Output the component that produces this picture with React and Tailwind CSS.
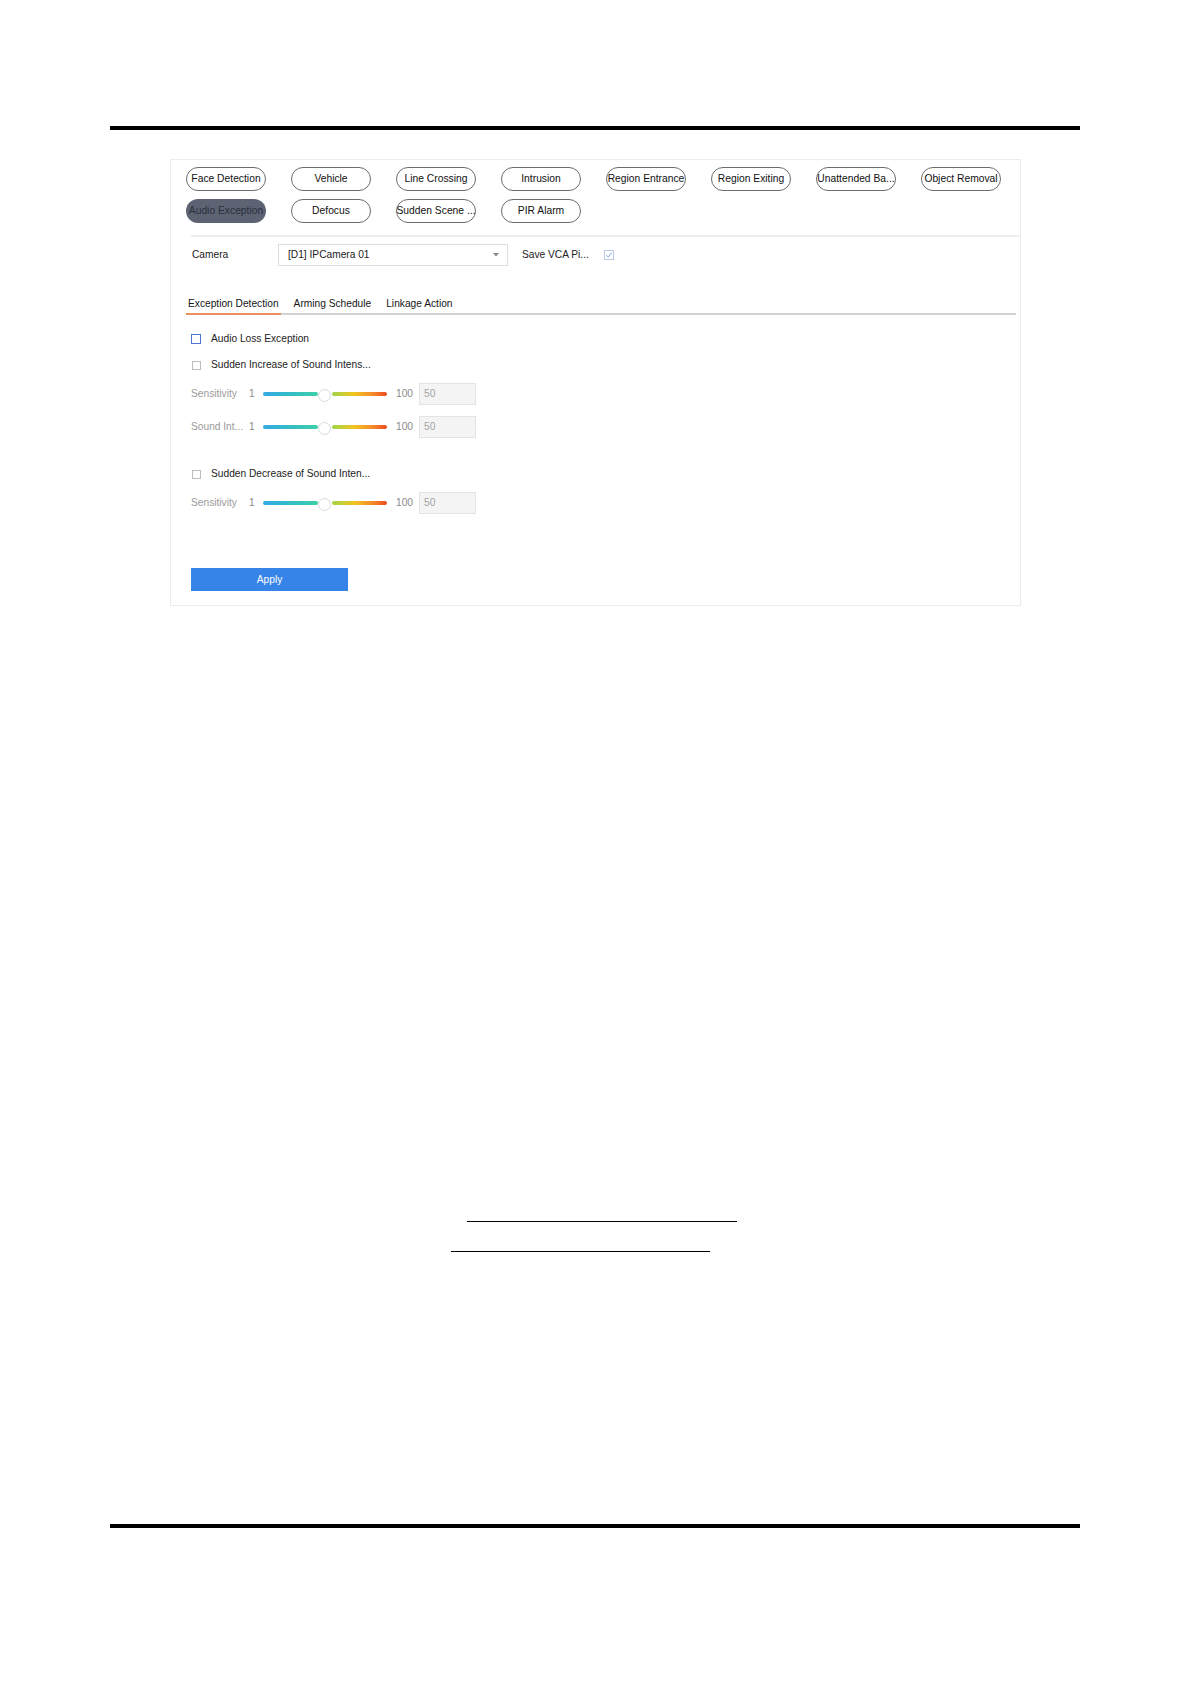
import React from "react";

const pillsRow1 = ["Face Detection", "Vehicle", "Line Crossing", "Intrusion", "Region Entrance", "Region Exiting", "Unattended Ba...", "Object Removal"];
const pillsRow2 = ["Audio Exception", "Defocus", "Sudden Scene ...", "PIR Alarm"];

function Pill({ label, active }) {
  if (active) {
    return (
      <div className="h-[24px] w-[80px] rounded-full bg-[#5d6373] flex items-center justify-center whitespace-nowrap text-[10.3px] text-[#2a2f3c] overflow-visible">
        {label}
      </div>
    );
  }
  return (
    <div className="h-[24px] w-[80px] rounded-full border border-[#6b6b6b] flex items-center justify-center whitespace-nowrap text-[10.3px] text-[#111111] overflow-visible">
      {label}
    </div>
  );
}

function Slider() {
  return (
    <div className="w-[124px] h-[14px] flex items-center">
      <div className="w-[55px] h-[4px] rounded-full bg-gradient-to-r from-[#34a9e4] to-[#3ccfa6]" />
      <div className="w-[13px] h-[13px] rounded-full bg-white border border-[#dadada] mt-[3px] shrink-0" />
      <div className="flex-1 ml-[1px] h-[4px] rounded-full bg-[linear-gradient(to_right,#9fd54a,#f1c51f_40%,#f3892a_75%,#ef4a21)]" />
    </div>
  );
}

function SliderRow({ label }) {
  return (
    <div className="flex items-center h-[22px] text-[10.2px]">
      <div className="w-[58px] text-[#9a9a9a] whitespace-nowrap">{label}</div>
      <div className="w-[14px] text-[#8a8a8a]">1</div>
      <Slider />
      <div className="ml-[9px] w-[23px] text-[#8a8a8a]">100</div>
      <div className="w-[57px] h-[22px] bg-[#f4f4f4] border border-[#e3e3e3] flex items-center pl-[4px] text-[#a5a5a5]">50</div>
    </div>
  );
}

function CheckRow({ label, blue }) {
  return (
    <div className="flex items-center h-[16px] text-[10.2px] text-[#222222]">
      {blue ? (
        <div className="w-[10px] h-[10px] border border-[#4a78cf] bg-white shrink-0" />
      ) : (
        <div className="w-[9px] h-[9px] border border-[#bdbdbd] bg-white shrink-0 ml-[0.5px] mr-[0.5px]" />
      )}
      <div className="ml-[10px] whitespace-nowrap">{label}</div>
    </div>
  );
}

export default function App() {
  return (
    <div className="w-[1191px] h-[1684px] bg-white font-['Liberation_Sans',Arial,sans-serif] flex flex-col">
      <div className="mt-[126px] ml-[110px] w-[970px] h-[4px] bg-black" />

      <div className="mt-[29px] ml-[170px] w-[851px] h-[447px] border border-[#ececec] flex flex-col">
        <div className="pt-[7px] pl-[15px] grid grid-cols-[repeat(8,80px)] gap-x-[25px] gap-y-[8px]">
          {pillsRow1.map((p) => (
            <Pill key={p} label={p} />
          ))}
          {pillsRow2.map((p, i) => (
            <Pill key={p} label={p} active={i === 0} />
          ))}
        </div>

        <div className="mt-[12px] ml-[20px] h-[2px] bg-[#eeeeee]" />

        <div className="mt-[7px] pl-[21px] flex items-center h-[22px] text-[10.2px] text-[#222222]">
          <div className="w-[86px]">Camera</div>
          <div className="w-[230px] h-[22px] border border-[#dedede] flex items-center justify-between pl-[9px] pr-[8px]">
            <span>[D1] IPCamera 01</span>
            <svg width="6" height="4" viewBox="0 0 6 4">
              <path d="M0 0 L6 0 L3 3.5 Z" fill="#8a8a8a" />
            </svg>
          </div>
          <div className="ml-[14px] w-[82px] whitespace-nowrap">Save VCA Pi...</div>
          <svg width="10" height="10" viewBox="0 0 10 10">
            <rect x="0.5" y="0.5" width="9" height="9" fill="white" stroke="#b9c8e6" />
            <path d="M2.3 5.2 L4.2 7 L7.8 2.8" fill="none" stroke="#6d9be0" strokeWidth="0.9" />
          </svg>
        </div>

        <div className="mt-[28px] ml-[15px] w-[830px] flex border-b-2 border-[#d2d2d2] text-[10.2px] text-[#151515]">
          <div className="px-[2px] h-[19px] leading-[19px] -mb-[2px] border-b-2 border-[#e9905c] box-content">Exception Detection</div>
          <div className="ml-[13px] h-[19px] leading-[19px]">Arming Schedule</div>
          <div className="ml-[15px] h-[19px] leading-[19px]">Linkage Action</div>
        </div>

        <div className="pl-[20px] flex flex-col">
          <div className="mt-[16px]">
            <CheckRow label="Audio Loss Exception" blue />
          </div>
          <div className="mt-[10px]">
            <CheckRow label="Sudden Increase of Sound Intens..." />
          </div>
          <div className="mt-[10px]">
            <SliderRow label="Sensitivity" />
          </div>
          <div className="mt-[11px]">
            <SliderRow label="Sound Int..." />
          </div>
          <div className="mt-[28px]">
            <CheckRow label="Sudden Decrease of Sound Inten..." />
          </div>
          <div className="mt-[10px]">
            <SliderRow label="Sensitivity" />
          </div>
          <div className="mt-[54px] w-[157px] h-[23px] bg-[#3684e7] text-white text-[10.2px] flex items-center justify-center">
            Apply
          </div>
        </div>
      </div>

      <div className="mt-[615px] ml-[467px] w-[270px] h-px bg-black" />
      <div className="mt-[29px] ml-[451px] w-[259px] h-px bg-black" />

      <div className="mt-[272px] ml-[110px] w-[970px] h-[4px] bg-black" />
    </div>
  );
}
